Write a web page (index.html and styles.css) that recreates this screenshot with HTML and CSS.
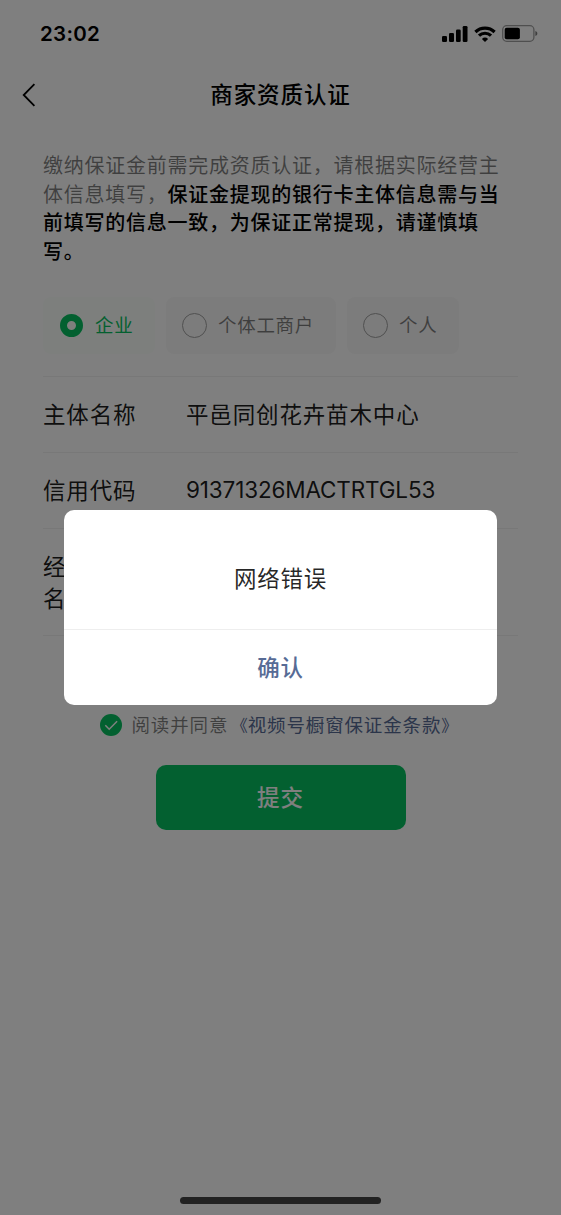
FILE: index.html
```html
<!DOCTYPE html>
<html lang="zh-CN">
<head>
<meta charset="utf-8">
<title>商家资质认证</title>
<link rel="stylesheet" href="styles.css">
</head>
<body>
<div class="screen">
  <header class="status">
    <span class="time">23:02</span>
    <div class="status-icons">
      <svg width="26" height="16" viewBox="0 0 26 16"><rect x="0" y="10" width="5" height="6" rx="1.3"/><rect x="7" y="7" width="5" height="9" rx="1.3"/><rect x="14" y="3.5" width="4.7" height="12.5" rx="1.3"/><rect x="20.7" y="0" width="4.8" height="16" rx="1.3"/></svg>
      <svg class="wifi" width="22" height="16" viewBox="0 0 22 16"><path d="M1.4 6a13.7 13.7 0 0 1 19.2 0M5 9.7a8.6 8.6 0 0 1 12 0" fill="none" stroke="#000" stroke-width="3.2"/><path d="M11 16l-3.1-3.1a4.5 4.5 0 0 1 6.2 0z"/></svg>
      <svg class="battery" width="36" height="17" viewBox="0 0 36 17"><rect x=".7" y=".7" width="31.2" height="15.6" rx="4" fill="none" stroke="#000" stroke-opacity=".38" stroke-width="1.3"/><rect x="2.7" y="2.7" width="15.2" height="11.6" rx="2"/><path d="M33.4 6v5c2.600-.8 2.600-4.200 0-5z" fill-opacity=".5"/></svg>
    </div>
  </header>
  <nav class="navbar">
    <svg class="back" width="14" height="24" viewBox="0 0 14 24"><path d="M12.400 1.200L1.700 12L12.400 22.800" fill="none" stroke="#000" stroke-width="1.8"/></svg>
    <h1 class="title">商家资质认证</h1>
  </nav>
  <main class="content">
    <p class="notice">缴纳保证金前需完成资质认证，请根据实际经营主<br>体信息填写，<b>保证金提现的银行卡主体信息需与当<br>前填写的信息一致，为保证正常提现，请谨慎填<br>写。</b></p>
    <div class="types">
      <div class="type type-on"><i class="radio"></i><span class="type-name">企业</span></div>
      <div class="type type-wide"><i class="radio"></i><span class="type-name">个体工商户</span></div>
      <div class="type"><i class="radio"></i><span class="type-name">个人</span></div>
    </div>
    <dl class="form">
      <div class="row"><dt>主体名称</dt><dd>平邑同创花卉苗木中心</dd></div>
      <div class="row"><dt>信用代码</dt><dd class="code">91371326MACTRTGL53</dd></div>
      <div class="row row-tall"><dt>经<br>名</dt></div>
    </dl>
  </main>
  <div class="agree">
    <svg width="22" height="22" viewBox="0 0 22 22"><circle cx="11" cy="11" r="11" fill="#07c160"/><path d="M5.300 11.300l3.900 3.900 7.900-7.900" fill="none" stroke="#fff" stroke-width="1.500"/></svg>
    <span class="agree-text">阅读并同意<a class="terms"><span class="bracket open">《</span>视频号橱窗保证金条款<span class="bracket">》</span></a></span>
  </div>
  <button class="submit">提交</button>
  <div class="home"></div>
  <div class="mask">
    <div class="dialog">
      <div class="message">网络错误</div>
      <div class="confirm">确认</div>
    </div>
  </div>
</div>
</body>
</html>
```

FILE: styles.css
```css
* { box-sizing: border-box; }
body { margin: 0; font-family: "Noto Sans CJK SC", sans-serif; }
svg { display: block; flex: none; }
.screen { position: relative; width: 561px; height: 1215px; background: #fff; overflow: hidden; display: flex; flex-direction: column; align-items: center; }
.status { width: 100%; height: 67px; padding: 0 22px 0 40px; display: flex; justify-content: space-between; align-items: center; }
.time { font: 600 20.5px/24px Inter, sans-serif; letter-spacing: .3px; }
.status-icons { display: flex; align-items: center; }
.wifi { margin-left: 6px; }
.battery { margin-left: 6px; margin-right: 1px; }
.navbar { width: 100%; height: 56px; padding: 0 22px; display: grid; grid-template-columns: 14px 1fr 14px; align-items: center; }
.title { margin: 0; padding-bottom: 4px; font-size: 22.5px; font-weight: 500; letter-spacing: .9px; line-height: 32px; text-align: center; }
.content { width: 475px; margin-top: 28px; }
.notice { margin: 0; height: 114px; font-size: 20px; line-height: 28.5px; letter-spacing: .75px; color: rgba(0,0,0,.5); white-space: nowrap; }
.notice b { font-weight: 500; color: #000; }
.types { display: flex; gap: 11px; margin-top: 32px; }
.type { width: 112px; height: 57px; padding-left: 16px; border-radius: 8px; background: #f9f9f9; color: rgba(0,0,0,.5); display: flex; align-items: center; gap: 11px; font-size: 18.5px; letter-spacing: .7px; white-space: nowrap; }
.type-name { padding-bottom: 3px; }
.type-wide { width: 170px; }
.type-on { background: #fafefb; color: #07c160; }
.radio { width: 25px; height: 25px; border: 1px solid #a0a0a0; border-radius: 50%; flex: none; }
.type-on .radio { width: 23px; height: 23px; border: 7px solid #07c160; margin-left: 1px; margin-right: 1px; }
.form { margin: 22px 0 0; font-size: 22.5px; line-height: 32px; letter-spacing: .85px; color: rgba(0,0,0,.9); border-top: 1px solid #f0f0f0; }
.row { height: 76px; padding-bottom: 4px; display: flex; align-items: center; border-bottom: 1px solid #f0f0f0; }
.row-tall { height: 107px; padding-bottom: 2px; }
.row dt { width: 143px; }
.row dd { margin: 0; }
.row .code { padding-top: 3px; font-family: Inter, sans-serif; font-size: 22.5px; letter-spacing: -.15px; }
.agree { margin-top: 75px; height: 27px; width: 362px; display: flex; align-items: center; gap: 10px; }
.agree-text { padding-bottom: 2px; font-size: 18.500px; letter-spacing: .850px; color: rgba(0,0,0,.5); white-space: nowrap; }
.terms { color: #576b95; }
.bracket { font-size: 16.5px; letter-spacing: 0; }
.open { margin-left: 3px; }
.submit { margin-top: 27px; width: 250px; height: 65px; padding: 0 0 4px; border: 0; border-radius: 10px; background: #07c160; color: #fff; font: 500 22.5px "Noto Sans CJK SC", sans-serif; letter-spacing: 1px; }
.home { width: 201px; height: 7px; border-radius: 4px; background: #444; margin-top: auto; margin-bottom: 11px; }
.mask { position: absolute; inset: 0; background: rgba(0,0,0,.5); display: flex; justify-content: center; align-items: center; }
.dialog { width: 433px; height: 195px; border-radius: 10px; background: #fff; text-align: center; font-size: 22.500px; letter-spacing: .800px; }
.message { height: 120px; padding-top: 51px; line-height: 32px; border-bottom: 1px solid #eee; color: rgba(0,0,0,.85); }
.confirm { line-height: 73px; font-weight: 500; color: #576b95; }
```
